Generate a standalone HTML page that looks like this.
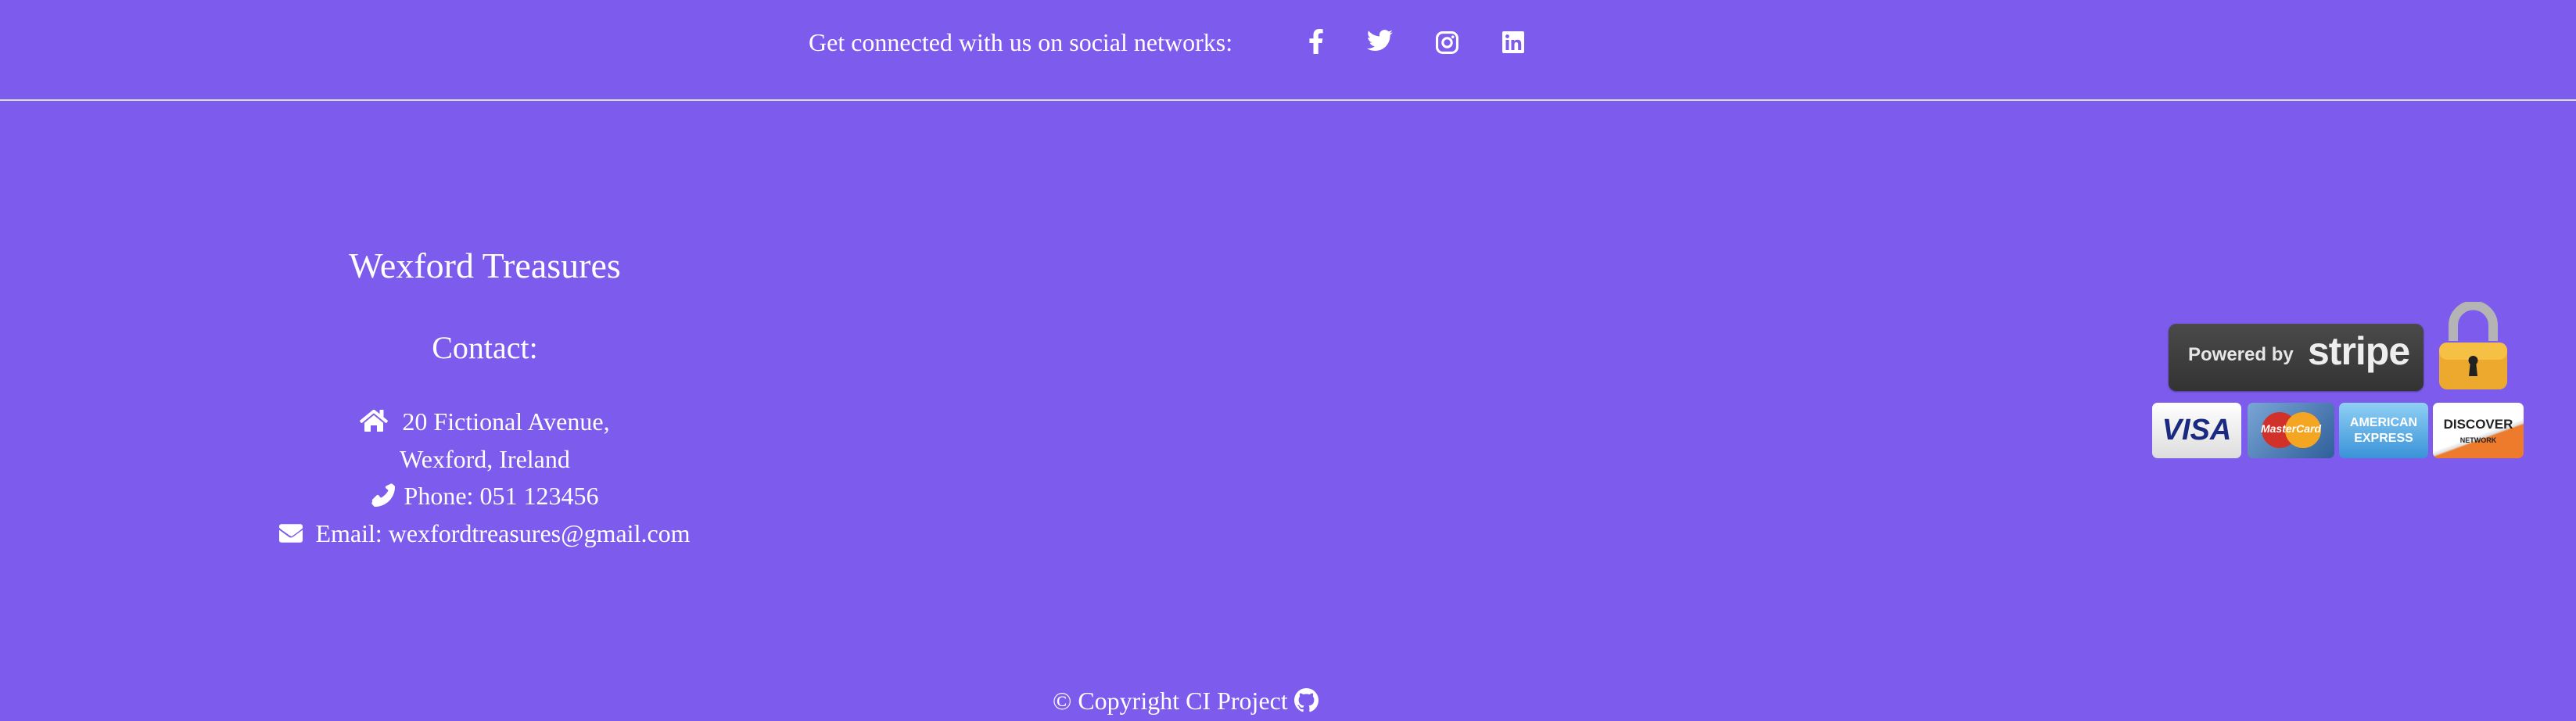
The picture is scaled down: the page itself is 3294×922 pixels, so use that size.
<!DOCTYPE html>
<html><head><meta charset="utf-8"><style>
*{margin:0;padding:0;box-sizing:border-box}
body{width:3294px;height:922px;background:#7d5bec;color:#fff;font-family:"Liberation Serif",serif;position:relative;overflow:hidden}
.abs{position:absolute;white-space:nowrap}
.hr{position:absolute;left:0;top:127px;width:3294px;height:2px;background:#dcdcdc}
.c{position:absolute;left:220px;width:800px;text-align:center}
svg{display:inline-block}
.card{position:absolute;top:515px;height:71px;border-radius:7px;overflow:hidden;font-family:"Liberation Sans",sans-serif;font-weight:bold;text-align:center}
</style></head><body>
<div class="abs" style="left:1034px;top:36px;font-size:32px">Get connected with us on social networks:</div>
<svg class="abs" style="left:1672px;top:37px" width="22" height="32" viewBox="0 0 320 512"><path fill="#fff" d="M279 288l14-93h-89v-60c0-25 12-50 53-50h41V6S260 0 225 0c-73 0-121 44-121 125v70H23v93h81v224h100V288z"/></svg>
<svg class="abs" style="left:1748px;top:38px" width="33" height="27" viewBox="0 0 512 416"><path fill="#fff" d="M459 104c0 5 0 9 0 14 0 139-106 299-299 299-59 0-115-17-161-47 8 1 16 1 25 1 49 0 94-17 130-45-46-1-85-31-98-73 6 1 13 2 20 2 9 0 19-1 27-4-48-10-84-52-84-103v-1c14 8 30 13 47 13-28-19-47-51-47-87 0-20 5-38 14-53 52 64 129 105 216 110-2-8-3-16-3-24 0-58 47-105 105-105 30 0 58 13 77 33 24-5 46-13 67-26-8 24-25 45-46 58 21-2 42-8 60-16-14 21-32 39-51 54z"/></svg>
<svg class="abs" style="left:1836px;top:40px" width="29" height="29" viewBox="0 0 28 28"><rect x="1.5" y="1.5" width="25" height="25" rx="7" fill="none" stroke="#fff" stroke-width="3"/><circle cx="14" cy="14" r="5.5" fill="none" stroke="#fff" stroke-width="3"/><circle cx="21" cy="7" r="1.7" fill="#fff"/></svg>
<svg class="abs" style="left:1921px;top:40px" width="28" height="28" viewBox="0 0 28 28"><rect width="28" height="28" rx="2" fill="#fff"/><rect x="4.5" y="11" width="4" height="13" fill="#7d5bec"/><circle cx="6.5" cy="6.5" r="2.4" fill="#7d5bec"/><path d="M11.5 11h3.8v1.8c.6-1.1 2-2.1 4.1-2.1 4 0 4.8 2.6 4.8 6V24h-4v-6.5c0-1.6 0-3.5-2.2-3.5s-2.5 1.7-2.5 3.4V24h-4z" fill="#7d5bec"/></svg>
<div class="hr"></div>

<div class="c" style="top:313px;font-size:46px">Wexford Treasures</div>
<div class="c" style="top:421px;font-size:40px">Contact:</div>
<div class="c" style="top:516px;font-size:32px;line-height:47.5px">
<div><svg width="36" height="30" viewBox="0 0 576 480" style="vertical-align:-2px;margin-right:18px"><path fill="#fff" d="M280 148L96 300v164c0 9 7 16 16 16h112V352h128v128h112c9 0 16-7 16-16V300L296 148c-5-4-11-4-16 0zM571 251L488 182V43c0-7-5-12-12-12h-56c-7 0-12 5-12 12v73L318 43c-17-14-43-14-60 0L4 251c-5 4-6 12-2 17l26 31c4 5 12 6 17 2L280 108c5-4 11-4 16 0l235 193c5 4 13 3 17-2l26-31c4-5 3-13-3-17z"/></svg>20 Fictional Avenue,</div>
<div>Wexford, Ireland</div>
<div><svg width="30" height="30" viewBox="0 0 512 512" style="vertical-align:-3px;margin-right:12px"><path fill="#fff" d="M497 361l-98-98c-13-13-34-12-46 2l-45 52c-71-36-128-93-164-164l52-45c14-12 15-33 2-46L100 15C88 3 69 2 56 13L11 53C4 60 0 69 0 79c0 239 194 433 433 433 10 0 19-4 26-11l40-45c11-13 10-32-2-45z" transform="translate(512 0) scale(-1 1)"/></svg>Phone: 051 123456</div>
<div><svg width="30" height="24" viewBox="0 0 512 400" style="vertical-align:-1px;margin-right:16px"><path fill="#fff" d="M502 132c4-3 10 0 10 5v215c0 27-22 48-48 48H48c-27 0-48-21-48-48V137c0-5 6-8 10-5 22 17 52 39 154 113 21 15 57 48 92 48s72-33 92-48c102-74 132-96 154-113zM256 268c23 0 57-29 74-41 133-96 143-105 173-129 6-5 9-12 9-19V48c0-27-21-48-48-48H48C21 0 0 21 0 48v19c0 7 3 14 9 19 30 24 40 33 173 129 17 12 51 41 74 41z"/></svg>Email: wexfordtreasures@gmail.com</div>
</div>

<div class="abs" style="left:2773px;top:414px;width:326px;height:86px;border-radius:10px;background:linear-gradient(#4a4a4a,#333);box-shadow:0 1px 2px rgba(0,0,0,.4)"></div>
<div class="abs" style="left:2798px;top:440px;font-family:'Liberation Sans',sans-serif;font-size:24px;font-weight:bold;color:#e6e6e6">Powered by</div>
<div class="abs" style="left:2951px;top:420px;font-family:'Liberation Sans',sans-serif;font-size:50px;font-weight:bold;color:#eee;letter-spacing:-1px">stripe</div>
<svg class="abs" style="left:3117px;top:386px" width="91" height="114" viewBox="0 0 91 114"><path d="M20 50V30a25.5 25.5 0 0 1 51 0v20" fill="none" stroke="#b4b4b4" stroke-width="12"/><rect x="2" y="52" width="87" height="60" rx="10" fill="#eda92e"/><rect x="2" y="52" width="87" height="22" rx="10" fill="#f5c043"/><circle cx="45.5" cy="75" r="6" fill="#222"/><path d="M42 76h7l2 19h-11z" fill="#222"/></svg>
<div class="card" style="left:2752px;width:114px;background:linear-gradient(#fff,#ddd);color:#1a2a80;font-size:38px;font-style:italic;line-height:71px">VISA</div>
<div class="card" style="left:2874px;width:111px;background:linear-gradient(135deg,#7aa6d6,#2f5f9a)"><div style="position:absolute;left:18px;top:12px;width:46px;height:46px;border-radius:50%;background:#d2312a"></div><div style="position:absolute;left:48px;top:12px;width:46px;height:46px;border-radius:50%;background:#f4a623"></div><div style="position:absolute;left:0;width:111px;top:25px;font-size:14px;font-style:italic;color:#fff">MasterCard</div></div>
<div class="card" style="left:2991px;width:114px;background:linear-gradient(#8fd0f4,#3a92d8);color:#fff;font-size:16px;line-height:20px;padding-top:16px">AMERICAN<br>EXPRESS</div>
<div class="card" style="left:3111px;width:116px;background:linear-gradient(160deg,#fff 55%,#ddd 60%,#ee7a2c 62%);color:#222;font-size:17px;line-height:18px;padding-top:19px">DISCOVER<br><span style="font-size:9px">NETWORK</span></div>

<div class="abs" style="left:1346px;top:878px;font-size:32px">© Copyright CI Project <svg width="31" height="31" viewBox="0 0 16 16" style="vertical-align:-4px"><path fill="#fff" d="M8 0C3.58 0 0 3.58 0 8c0 3.54 2.29 6.53 5.470 7.59.4.07.55-.17.55-.38v-1.33c-2.23.48-2.7-1.07-2.7-1.07-.36-.92-.89-1.170-.89-1.17-.73-.5.06-.49.06-.49.8.06 1.23.83 1.23.83.71 1.23 1.87.87 2.33.66.07-.52.28-.87.51-1.07-1.78-.2-3.65-.89-3.65-3.95 0-.87.31-1.59.82-2.15-.08-.2-.36-1.02.08-2.12 0 0 .67-.21 2.2.82a7.6 7.6 0 0 1 4 0c1.53-1.04 2.2-.82 2.2-.82.44 1.1.16 1.92.08 2.12.51.56.82 1.27.82 2.15 0 3.07-1.87 3.75-3.65 3.95.29.25.54.73.54 1.48v2.2c0 .21.15.46.55.38A8 8 0 0 0 16 8c0-4.42-3.58-8-8-8z"/></svg></div>
</body></html>
